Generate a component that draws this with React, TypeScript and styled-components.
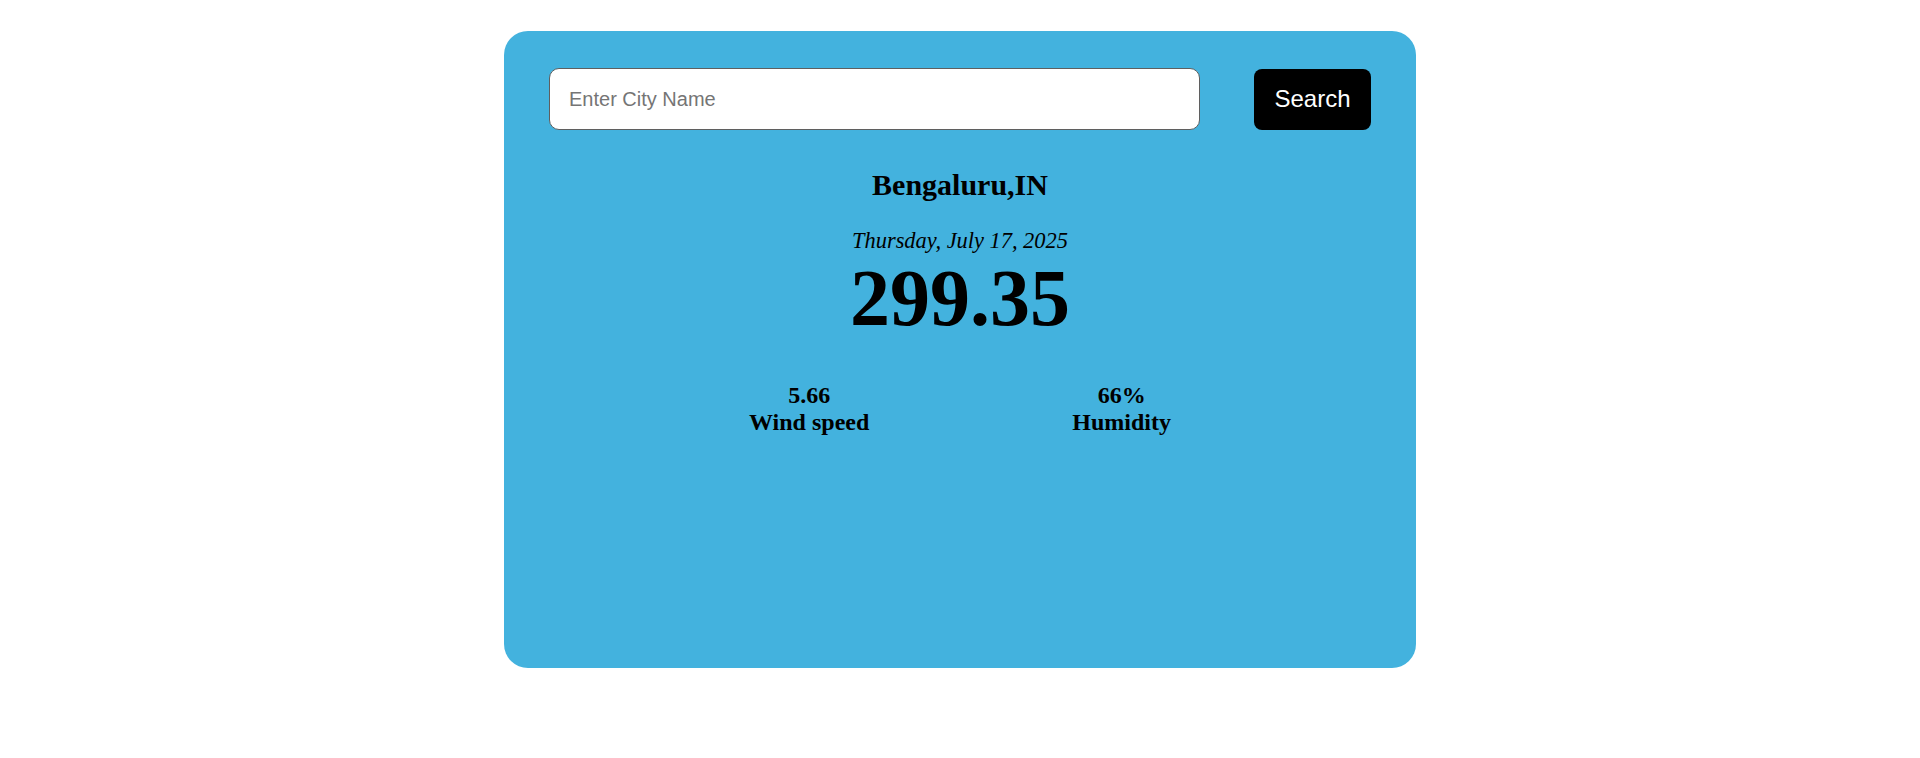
import React from "react";
import styled, { createGlobalStyle } from "styled-components";

const GlobalStyle = createGlobalStyle`
  html, body {
    margin: 0;
    padding: 0;
    background: #ffffff;
  }
  body {
    font-family: "Liberation Serif", "Times New Roman", serif;
    color: #000;
  }
`;

const Page = styled.div`
  display: flex;
  justify-content: center;
  padding-top: 31px;
`;

const Card = styled.div`
  box-sizing: border-box;
  width: 912px;
  height: 637px;
  padding: 37px 45px;
  background: #43b2de;
  border-radius: 24px;
  display: flex;
  flex-direction: column;
  align-items: center;
`;

const SearchRow = styled.div`
  align-self: stretch;
  display: flex;
  align-items: center;
  gap: 54px;
`;

const CityInput = styled.input`
  box-sizing: border-box;
  flex: 1;
  height: 62px;
  padding: 0 19px;
  border: 1px solid #5f5f5f;
  border-radius: 10px;
  background: #fff;
  font-family: "Liberation Sans", Arial, sans-serif;
  font-size: 20px;
  outline: none;
  &::placeholder {
    color: #757575;
  }
`;

const SearchButton = styled.button`
  box-sizing: border-box;
  width: 117px;
  height: 61px;
  border: none;
  border-radius: 8px;
  background: #000;
  color: #fff;
  font-family: "Liberation Sans", Arial, sans-serif;
  font-size: 24px;
  cursor: pointer;
`;

const City = styled.h2`
  margin: 37px 0 0;
  font-size: 30px;
  line-height: 36px;
  font-weight: bold;
`;

const DateLine = styled.p`
  margin: 25px 0 0;
  font-size: 22.4px;
  line-height: 26px;
  font-style: italic;
`;

const Temperature = styled.h1`
  margin: 4px 0 0;
  font-size: 80px;
  line-height: 80px;
  font-weight: bold;
`;

const Stats = styled.div`
  display: flex;
  gap: 203px;
  margin-top: 44px;
`;

const Stat = styled.div`
  display: flex;
  flex-direction: column;
  align-items: center;
  font-size: 24px;
  line-height: 27px;
  font-weight: bold;
`;

export default function App() {
  return (
    <>
      <GlobalStyle />
      <Page>
        <Card>
          <SearchRow>
            <CityInput placeholder="Enter City Name" />
            <SearchButton>Search</SearchButton>
          </SearchRow>
          <City>Bengaluru,IN</City>
          <DateLine>Thursday, July 17, 2025</DateLine>
          <Temperature>299.35</Temperature>
          <Stats>
            <Stat>
              <span>5.66</span>
              <span>Wind speed</span>
            </Stat>
            <Stat>
              <span>66%</span>
              <span>Humidity</span>
            </Stat>
          </Stats>
        </Card>
      </Page>
    </>
  );
}
